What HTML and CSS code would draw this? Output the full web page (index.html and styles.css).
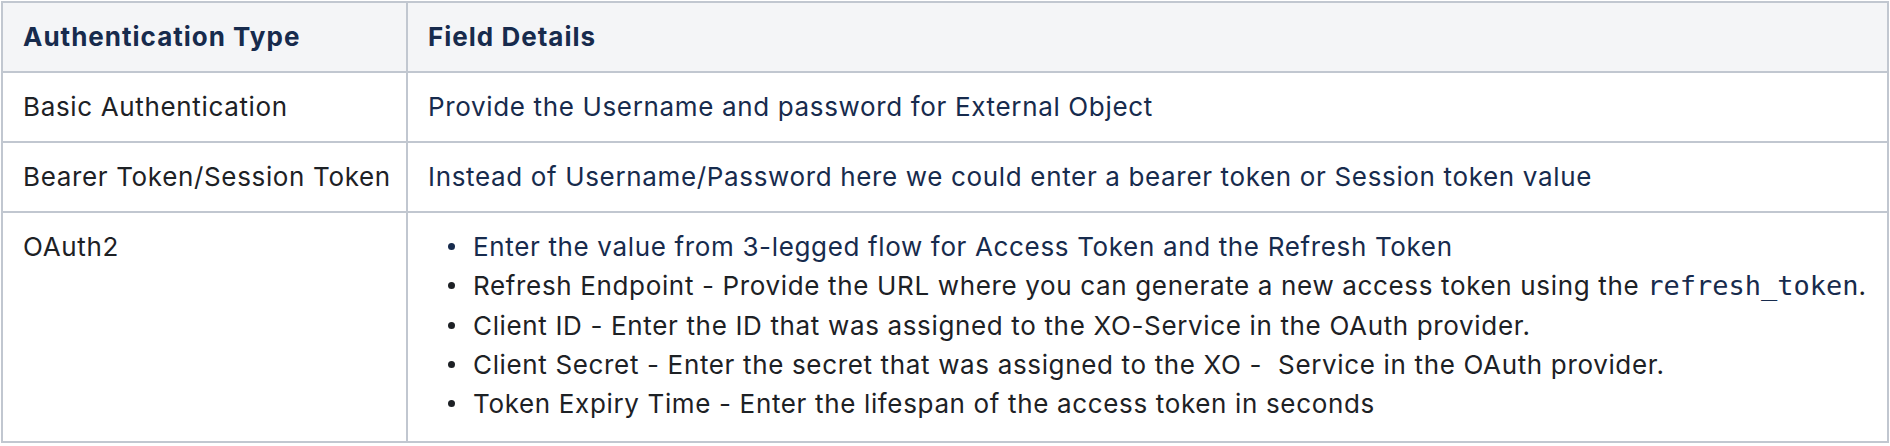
FILE: index.html
```html
<!DOCTYPE html>
<html lang="en">
<head>
<meta charset="utf-8">
<title>Authentication Types</title>
<link rel="stylesheet" href="styles.css">
</head>
<body>
<table class="auth-table">
  <colgroup>
    <col class="col-type">
    <col class="col-details">
  </colgroup>
  <thead>
    <tr>
      <th>Authentication Type</th>
      <th>Field Details</th>
    </tr>
  </thead>
  <tbody>
    <tr>
      <td class="type">Basic Authentication</td>
      <td class="details">Provide the Username and password for External Object</td>
    </tr>
    <tr>
      <td class="type">Bearer Token/Session Token</td>
      <td class="details">Instead of Username/Password here we could enter a bearer token or Session token value</td>
    </tr>
    <tr>
      <td class="type">OAuth2</td>
      <td class="details list-cell">
        <ul class="field-list">
          <li class="accent"><span>Enter the value from 3-legged flow for Access Token and the Refresh Token</span></li>
          <li><span>Refresh Endpoint - Provide the URL where you can generate a new access token using the <code>refresh_token</code>.</span></li>
          <li><span>Client ID - Enter the ID that was assigned to the XO-Service in the OAuth provider.</span></li>
          <li><span>Client Secret - Enter the secret that was assigned to the XO -&nbsp; Service in the OAuth provider.</span></li>
          <li><span>Token Expiry Time - Enter the lifespan of the access token in seconds</span></li>
        </ul>
      </td>
    </tr>
  </tbody>
</table>
</body>
</html>
```

FILE: styles.css
```css
html, body {
  margin: 0;
  padding: 0;
  background: #ffffff;
}

body {
  padding: 1px 0 0 1px;
  font-family: Inter, "Noto Sans", "Liberation Sans", sans-serif;
  font-size: 26px;
  letter-spacing: 0.65px;
  color: #1d2125;
}

.auth-table {
  width: 1888px;
  border-collapse: collapse;
  table-layout: fixed;
}

.col-type {
  width: 405px;
}

.auth-table th,
.auth-table td {
  border: 2px solid #c1c7d0;
  padding: 14px 20px;
  line-height: 40px;
  text-align: left;
  vertical-align: top;
  white-space: nowrap;
}

.auth-table th {
  background: #f4f5f7;
  font-weight: 700;
  letter-spacing: 1px;
  color: #172b4d;
}

.auth-table td.type {
  color: #1d2125;
}

.auth-table td.details {
  color: #172b4d;
}

.auth-table td.list-cell {
  padding-bottom: 18px;
}

.field-list {
  list-style: none;
  margin: 0;
  padding: 0 0 0 20px;
}

.field-list li {
  display: flex;
  align-items: center;
  gap: 18px;
  line-height: 39.25px;
  color: #1d2125;
}

.field-list li::before {
  content: "";
  flex: none;
  width: 7px;
  height: 7px;
  border-radius: 50%;
  background: currentColor;
}

.field-list li.accent {
  color: #172b4d;
}

.field-list code {
  font-family: "DejaVu Sans Mono", "Liberation Mono", monospace;
  font-size: 27px;
  letter-spacing: 0;
  color: #172b4d;
}
```
